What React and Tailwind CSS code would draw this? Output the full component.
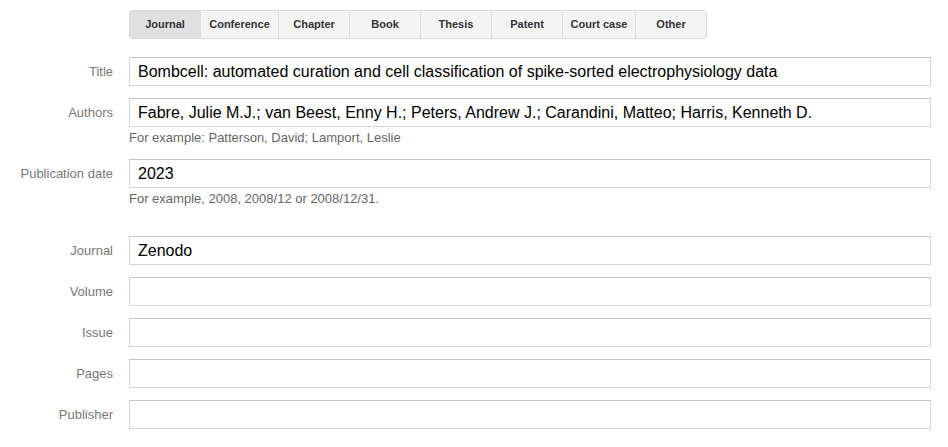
import React from "react";

const tabs = [
  { label: "Journal", w: "w-[70px]" },
  { label: "Conference", w: "w-[78px]" },
  { label: "Chapter", w: "w-[71px]" },
  { label: "Book", w: "w-[71px]" },
  { label: "Thesis", w: "w-[71px]" },
  { label: "Patent", w: "w-[71px]" },
  { label: "Court case", w: "w-[73px]" },
  { label: "Other", w: "w-[71px]" },
];

function Field({ label, value, help, className = "" }) {
  return (
    <div className={className}>
      <div className="flex items-center">
        <label className="w-[113px] shrink-0 text-right text-[13px] text-[#777]">{label}</label>
        <div className="ml-4 flex h-[29px] flex-1 items-center border border-[#d6d6d6] border-t-[#c4c4c4] bg-white pl-2 text-[16px] text-black">
          {value}
        </div>
      </div>
      {help && (
        <p className="ml-[129px] mt-[2px] text-[13px] leading-[18px] text-[#666]">{help}</p>
      )}
    </div>
  );
}

export default function App() {
  return (
    <div className="min-h-[447px] bg-white pr-[17px] pt-[10px] font-['Liberation_Sans',Arial,sans-serif]">
      {/* Type selector */}
      <div className="ml-[129px] flex w-fit overflow-hidden rounded-[3px] border border-[#dcdcdc]">
        {tabs.map((t, i) => (
          <div
            key={t.label}
            className={`flex h-[27px] items-center justify-center text-[11px] font-bold text-[#333] ${t.w} ${
              i > 0 ? "border-l border-[#dcdcdc]" : ""
            } ${i === 0 ? "bg-[#e0e0e0]" : "bg-[#f4f4f4]"}`}
          >
            {t.label}
          </div>
        ))}
      </div>

      <div className="mt-[18px] flex flex-col gap-3">
        <Field
          label="Title"
          value="Bombcell: automated curation and cell classification of spike-sorted electrophysiology data"
        />
        <Field
          label="Authors"
          value="Fabre, Julie M.J.; van Beest, Enny H.; Peters, Andrew J.; Carandini, Matteo; Harris, Kenneth D."
          help="For example: Patterson, David; Lamport, Leslie"
        />
        <Field label="Publication date" value="2023" help="For example, 2008, 2008/12 or 2008/12/31." />
        <Field label="Journal" value="Zenodo" className="mt-4" />
        <Field label="Volume" value="" />
        <Field label="Issue" value="" />
        <Field label="Pages" value="" />
        <Field label="Publisher" value="" />
      </div>
    </div>
  );
}
